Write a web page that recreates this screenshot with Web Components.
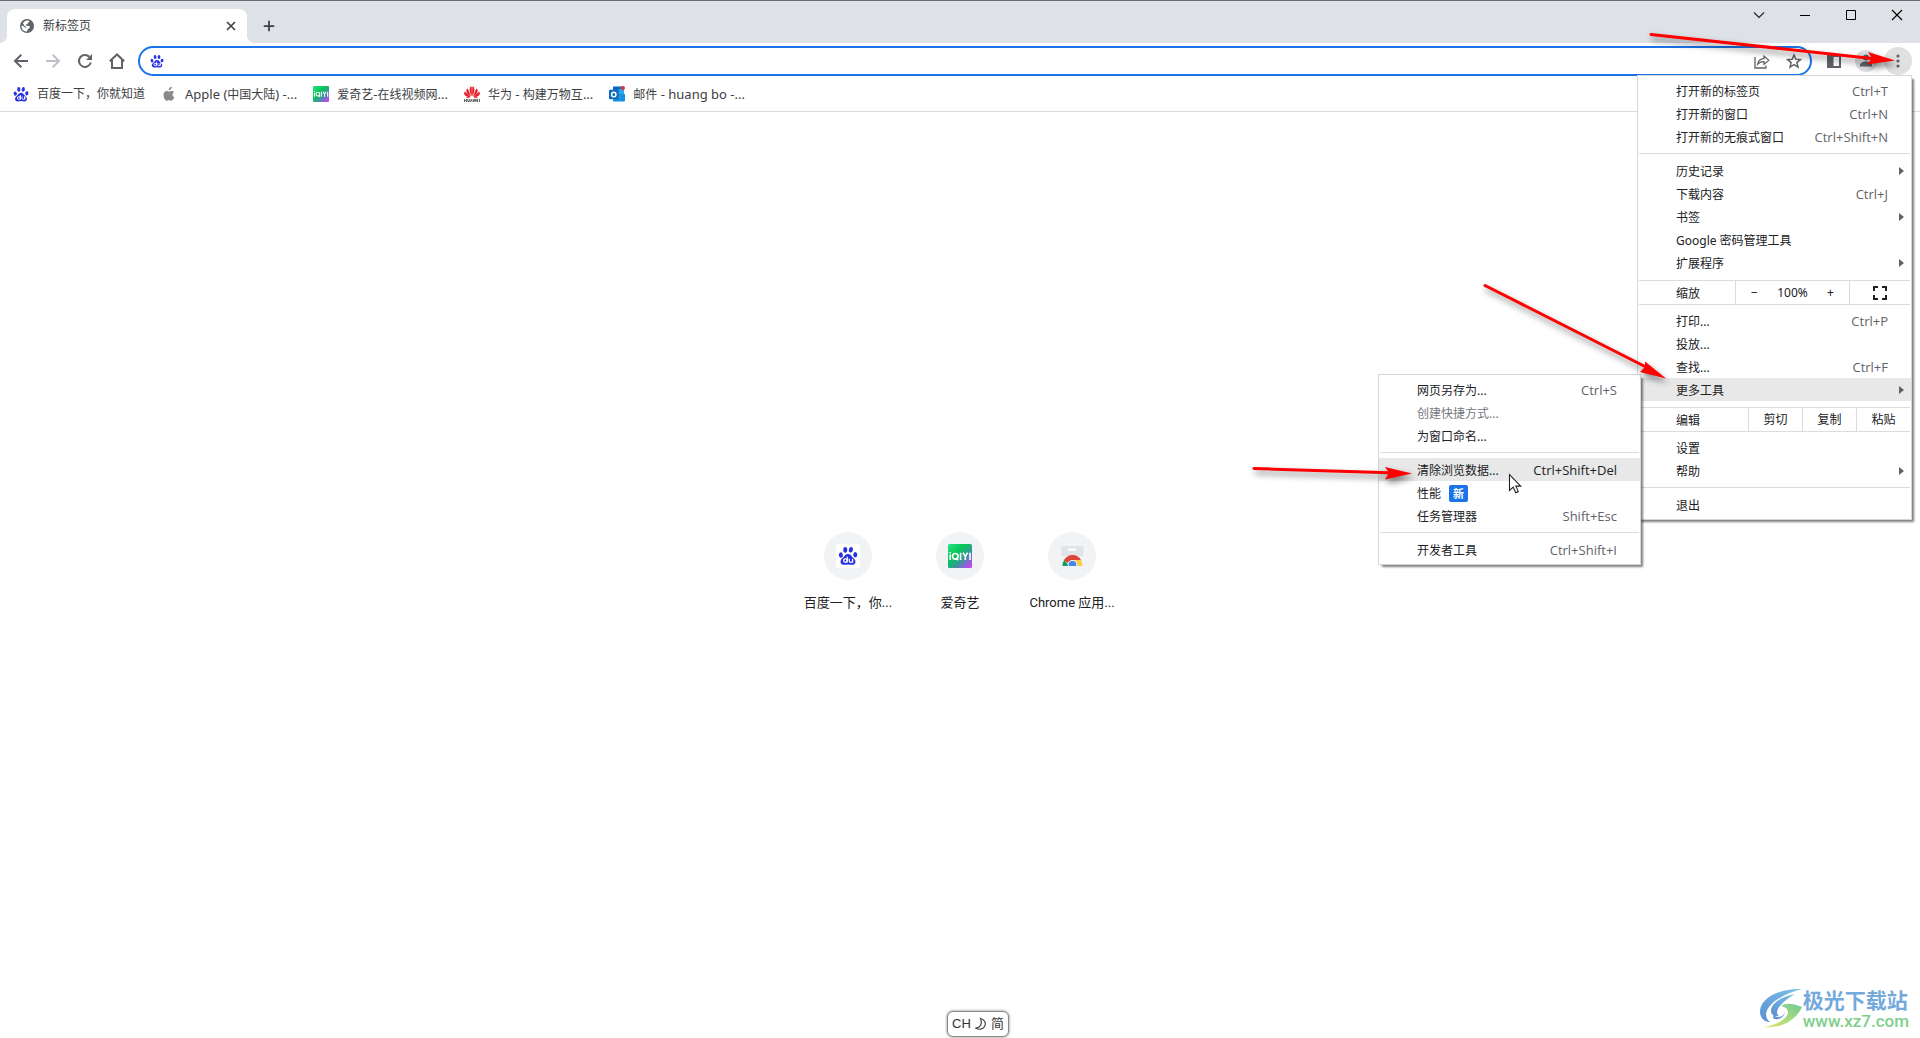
<!DOCTYPE html>
<html lang="zh-CN">
<head>
<meta charset="utf-8">
<title>新标签页</title>
<style>
  html, body { margin: 0; height: 100%; }
  body {
    font: 12px/16px "Noto Sans", "Noto Sans CJK SC", sans-serif;
    color: #202124;
    background: #fff;
    overflow: hidden;
  }
  .latin { font-size: 13px; }
</style>
</head>
<body>
<browser-window>
  <tab-strip slot="tabs" label="新标签页"></tab-strip>
  <nav-toolbar slot="toolbar"></nav-toolbar>
  <bookmarks-bar slot="bookmarks">
    <bookmark-item><ui-icon slot="icon" name="baidu"></ui-icon>百度一下，你就知道</bookmark-item>
    <bookmark-item><ui-icon slot="icon" name="apple"></ui-icon><span class="latin">Apple (</span>中国大陆<span class="latin">) -...</span></bookmark-item>
    <bookmark-item><ui-icon slot="icon" name="iqiyi"></ui-icon>爱奇艺<span class="latin">-</span>在线视频网<span class="latin">...</span></bookmark-item>
    <bookmark-item><ui-icon slot="icon" name="huawei"></ui-icon>华为<span class="latin"> - </span>构建万物互<span class="latin">...</span></bookmark-item>
    <bookmark-item><ui-icon slot="icon" name="outlook"></ui-icon>邮件<span class="latin"> - huang bo -...</span></bookmark-item>
  </bookmarks-bar>

  <shortcut-tile><ui-icon slot="icon" name="baidu-tile" size="24"></ui-icon>百度一下，你...</shortcut-tile>
  <shortcut-tile><ui-icon slot="icon" name="iqiyi" size="24"></ui-icon>爱奇艺</shortcut-tile>
  <shortcut-tile><ui-icon slot="icon" name="webstore" size="24"></ui-icon>Chrome 应用...</shortcut-tile>

  <popup-menu slot="overlay" class="main">
    <menu-item keys="Ctrl+T">打开新的标签页</menu-item>
    <menu-item keys="Ctrl+N">打开新的窗口</menu-item>
    <menu-item keys="Ctrl+Shift+N">打开新的无痕式窗口</menu-item>
    <menu-separator></menu-separator>
    <menu-item submenu>历史记录</menu-item>
    <menu-item keys="Ctrl+J">下载内容</menu-item>
    <menu-item submenu>书签</menu-item>
    <menu-item>Google 密码管理工具</menu-item>
    <menu-item submenu>扩展程序</menu-item>
    <zoom-row></zoom-row>
    <menu-item keys="Ctrl+P">打印...</menu-item>
    <menu-item>投放...</menu-item>
    <menu-item keys="Ctrl+F">查找...</menu-item>
    <menu-item submenu active>更多工具</menu-item>
    <edit-row></edit-row>
    <menu-item>设置</menu-item>
    <menu-item submenu>帮助</menu-item>
    <menu-separator></menu-separator>
    <menu-item>退出</menu-item>
  </popup-menu>
  <popup-menu slot="overlay" class="sub">
    <menu-item keys="Ctrl+S">网页另存为...</menu-item>
    <menu-item disabled>创建快捷方式...</menu-item>
    <menu-item>为窗口命名...</menu-item>
    <menu-separator></menu-separator>
    <menu-item keys="Ctrl+Shift+Del" active>清除浏览数据...</menu-item>
    <menu-item badge="新">性能</menu-item>
    <menu-item keys="Shift+Esc">任务管理器</menu-item>
    <menu-separator></menu-separator>
    <menu-item keys="Ctrl+Shift+I">开发者工具</menu-item>
  </popup-menu>
  <guide-arrows slot="overlay"></guide-arrows>
  <ime-status slot="overlay"></ime-status>
  <site-watermark slot="overlay"></site-watermark>
</browser-window>

<script>
const define = (name, html, setup) => {
  const template = document.createElement('template');
  template.innerHTML = html;
  customElements.define(name, class extends HTMLElement {
    constructor() {
      super();
      this.attachShadow({ mode: 'open' }).append(template.content.cloneNode(true));
    }
    connectedCallback() { if (setup) setup(this, this.shadowRoot); }
  });
};

const reset = `
  :host, * { box-sizing: border-box; }
  button, input { font: inherit; color: inherit; border: 0; background: none; padding: 0; margin: 0; outline: 0; }
  button { display: flex; align-items: center; justify-content: center; }
  svg { display: block; }
`;

const paw = `
  <g fill="#2932e1">
    <ellipse cx="2.3" cy="7.6" rx="1.6" ry="2.1" transform="rotate(-12 2.3 7.6)"/>
    <ellipse cx="5.8" cy="3.4" rx="1.6" ry="2.3"/>
    <ellipse cx="10.3" cy="3.4" rx="1.6" ry="2.3" transform="rotate(8 10.3 3.4)"/>
    <ellipse cx="13.8" cy="7.4" rx="1.6" ry="2.1" transform="rotate(12 13.8 7.4)"/>
    <path d="M8 6.800c1.600 0 2.500 1.100 3.300 2.200s2.700 2.100 2.700 3.900c0 1.600-1.200 2.500-2.700 2.500-1.200 0-2.100-.3-3.300-.3s-2.100.3-3.300.3C3.200 15.400 2 14.500 2 12.900c0-1.800 1.900-2.800 2.700-3.900S6.400 6.800 8 6.800z"/>
  </g>
  <g fill="none" stroke="#fff" stroke-width="1">
    <circle cx="5.900" cy="12" r="1.400"/><path d="M7.400 9v4.600M9 10.500v1.800c0 1.500 2.700 1.500 2.700 0v-1.800M11.700 10.500v3.100"/>
  </g>`;

const icons = {
  baidu: ['0 0 16 16', paw],
  'baidu-tile': ['0 0 24 24', `<rect width="24" height="24" rx="3" fill="#fff"/><g transform="translate(2 1.500) scale(1.250)">${paw}</g>`],
  apple: ['0 0 16 16', `<path fill="#8a8a8a" d="M10.700.8c.1 1-.3 1.800-.8 2.400-.6.600-1.300 1-2.100.9-.1-.900.300-1.700.800-2.300.6-.600 1.400-1 2.100-1zM13.300 11.300c-.7 1.700-1.700 3.400-2.900 3.400-.9 0-1.200-.5-2.200-.5s-1.400.500-2.200.5c-1.700 0-3.500-3.200-3.500-5.800 0-2.500 1.600-3.900 3.200-3.900 1 0 1.800.600 2.500.6.600 0 1.500-.7 2.700-.7.8 0 1.700.400 2.300 1.200-2.200 1.300-1.900 4.300.1 5.200z"/>`],
  iqiyi: ['0 0 24 24', `<defs><linearGradient id="g" x1="0" y1="0" x2="1" y2="1"><stop offset="0" stop-color="#2be08a"/><stop offset=".35" stop-color="#06c755"/><stop offset=".6" stop-color="#2e9f8f"/><stop offset=".8" stop-color="#8a63d8"/><stop offset="1" stop-color="#e23cf0"/></linearGradient></defs>
    <rect width="24" height="24" rx="1.500" fill="url(#g)"/>
    <g fill="none" stroke="#fff" stroke-width="1.600"><path d="M2.200 10.500V16M2.200 8v1.300"/><circle cx="7.300" cy="12.300" r="2.800"/><path d="M8 14l2 2.300M12.600 8.700V16M15 8.700l2.300 3.800 2.300-3.800M17.300 12.300V16M22 8.700V16"/></g>`],
  huawei: ['0 0 16 16', `<g fill="#e8202a">
      <path d="M7.700 10.600C5.900 7 5.200 4.600 5.800 1.900 6.100.8 6.900.4 7.600.5c.3 3.200.4 6.700.1 10.100zM8.300 10.600c1.800-3.600 2.500-6 1.900-8.700C9.900.8 9.100.4 8.400.5c-.3 3.200-.4 6.700-.1 10.100z"/>
      <path d="M6.900 10.700C3.700 8.500 2.200 6.200 2.300 4.400c.1-1 .8-1.500 1.500-1.800 1 2.600 2.200 5.300 3.100 8.100zM9.100 10.700c3.200-2.200 4.700-4.500 4.600-6.300-.1-1-.8-1.500-1.500-1.800-1 2.600-2.200 5.300-3.100 8.100z"/>
      <path d="M6.400 11.100C3.400 11.200.9 10 .3 8.200 0 7 .3 6.200.7 5.600c2 1.600 4 3.500 5.700 5.500zM9.600 11.100c3 .1 5.500-1.100 6.100-2.900.3-1.200 0-2-.4-2.600-2 1.600-4 3.500-5.700 5.500z"/>
      <path d="M6.300 11.600c-1.700.8-3.300.8-4.500-.3 1.500-.1 3-.1 4.500.3zM9.700 11.600c1.700.8 3.300.8 4.500-.3-1.500-.1-3-.1-4.500.3z"/></g>
    <path stroke="#444" stroke-width=".8" fill="none" d="M.5 13v3M2.500 13v3M.5 14.500h2M3.800 13v2.500h1.600V13M6.300 16l1-2.800 1 2.800M9 13l.7 2.700.7-2.400.7 2.400.7-2.700M14.200 13.500h-1.400v2h1.400M12.800 14.500h1.200M15.500 13v3"/>`],
  outlook: ['0 0 16 16', `<path fill="#0a66bd" d="M4 .5h10a1 1 0 0 1 1 1V11H4z"/><path fill="#28a8ea" d="M9.500 3h5.500v5H9.500z"/><path fill="#50d9ff" d="M4 8h12v7H4z" opacity=".35"/><path fill="#1490df" d="M4 15.200V8l6.500 3.500L16 7.800v6.800a1 1 0 0 1-1 1H4.500z"/><rect y="3.800" width="9.500" height="9.500" rx=".8" fill="#0f6cbd"/><circle cx="4.800" cy="8.500" r="2.200" fill="none" stroke="#fff" stroke-width="1.400"/><circle cx="14" cy="2" r="2" fill="#e0343c"/>`],
  webstore: ['0 0 24 24', `<path fill="#e2e3e5" d="M2.200 2h20.600a.7.700 0 0 1 .7.700V12H1.500V2.700a.7.700 0 0 1 .7-.7z"/><rect x="8" y="4.500" width="8" height="2.200" rx="1.100" fill="#fff"/>
    <path fill="#0f9d58" d="M2.500 22a10 10 0 0 1 1.800-6.300L9 22z"/><path fill="#db4437" d="M4 16c1.800-3 4.800-5 8.500-5 3.600 0 6.600 1.700 8.500 5h-8.500l-4.700 3z"/><path fill="#ffcd40" d="M13 16h8a10 10 0 0 1 1.300 6H14z"/><circle cx="12.500" cy="21" r="4.900" fill="#f1f3f4"/><circle cx="12.500" cy="21" r="3.900" fill="#4285f4"/><path fill="#f1f3f4" d="M0 22h24v4H0z"/>`],
  globe: ['0 0 16 16', `<circle cx="8" cy="8" r="7" fill="#5f6368"/><path fill="#fff" d="M7.300 2.400c1.700 0 2.900.2 3.100 1.200.2.900-1.500.9-1.700 1.900-.1.900-1.800.6-2 1.600-.2.900 1.700.8 3.300.9 1 .2.900 1.300.5 2-.6.900-1.600.7-1.900 1.900-.1.800-.6 1.500-1.200 1.500-4-.3-5.200-3.600-4.800-6 1.400.2 2.600 1 3.300 2.200.5.500 1.500.3 1.400-.5-.3-.7-2.100-.7-2.300-1.800-.2-1.200-.1-1.500-1.200-1.600.7-1.700 1.900-2.900 3.500-3.300z"/>`],
  close: ['0 0 16 16', `<path d="M4 4l8 8M12 4l-8 8" stroke="#3c4043" stroke-width="1.600"/>`],
  plus: ['0 0 16 16', `<path d="M8 2v12M2 8h12" stroke="#3c4043" stroke-width="2"/>`],
  back: ['0 0 16 16', `<path d="M15 8H2.500M8.300 1.700L2 8l6.300 6.300" fill="none" stroke="#5f6368" stroke-width="2"/>`],
  forward: ['0 0 16 16', `<path d="M1 8h12.500M7.700 1.700L14 8l-6.300 6.300" fill="none" stroke="#bdc1c6" stroke-width="2"/>`],
  reload: ['0 0 16 16', `<path d="M13.800 9.500A6 6 0 1 1 12.300 3.700" fill="none" stroke="#5f6368" stroke-width="2"/><path fill="#5f6368" d="M15 1v6H9z"/>`],
  home: ['0 0 16 16', `<path d="M.8 8.300L8 1.500l7.200 6.800M3 7v8h10V7" fill="none" stroke="#5f6368" stroke-width="2"/>`],
  share: ['0 0 16 16', `<path d="M1 4v11h11v-2.500" fill="none" stroke="#5f6368" stroke-width="1.300"/><path d="M3.500 11.500c.5-3.500 2.500-5.500 6.500-5.800V3l4.800 4.200L10 11.400V8.700c-3-.1-5 .9-6.500 2.800z" fill="none" stroke="#5f6368" stroke-width="1.200"/>`],
  star: ['0 0 16 16', `<path d="M8 2l1.800 4.200 4.600.4-3.500 3 1.100 4.500L8 11.700l-4 2.400 1.100-4.500-3.500-3 4.600-.4z" fill="none" stroke="#5f6368" stroke-width="1.500"/>`],
  panel: ['0 0 16 16', `<path fill="#5f6368" fill-rule="evenodd" d="M1 2h14v13H1zM7.500 4v9H13V4z"/>`],
  avatar: ['0 0 22 22', `<circle cx="11" cy="11" r="11" fill="#dadce0"/><circle cx="11" cy="7.500" r="3" fill="#5f6368"/><path fill="#5f6368" d="M5 16.500v-1.300c0-2.400 3-3.700 6-3.700s6 1.300 6 3.700v1.300z"/>`],
  dots: ['0 0 16 16', `<g fill="#5f6368"><circle cx="8" cy="3" r="1.600"/><circle cx="8" cy="8" r="1.600"/><circle cx="8" cy="13" r="1.600"/></g>`],
  chevron: ['0 0 12 12', `<path d="M1 3.500l5 5 5-5" fill="none" stroke="#202124" stroke-width="1.100"/>`],
  min: ['0 0 12 12', `<path d="M1 6.500h10" stroke="#000"/>`],
  max: ['0 0 12 12', `<path d="M1.500 1.500h9v9h-9z" fill="none" stroke="#000"/>`],
  quit: ['0 0 12 12', `<path d="M1 1l10 10M11 1L1 11" stroke="#000" stroke-width="1.200"/>`],
  full: ['0 0 14 14', `<path d="M1 5V1h4M9 1h4v4M13 9v4H9M5 13H1V9" fill="none" stroke="#202124" stroke-width="2"/>`],
};

define('ui-icon', `<style>:host{display:block;flex:none} svg{display:block}</style>`, (el, root) => {
  const [box, body] = icons[el.getAttribute('name')];
  const size = el.getAttribute('size') || 16;
  root.innerHTML += `<svg width="${size}" height="${size}" viewBox="${box}" aria-hidden="true">${body}</svg>`;
});

define('browser-window', `<style>${reset}
  :host { display: flex; flex-direction: column; height: 100vh; position: relative; }
  main { flex: 1; display: flex; justify-content: center; align-items: flex-start; padding-top: 420px; }
</style>
<slot name="tabs"></slot><slot name="toolbar"></slot><slot name="bookmarks"></slot>
<main><slot></slot></main>
<slot name="overlay"></slot>`);

define('tab-strip', `<style>${reset}
  :host { display: flex; align-items: flex-end; height: 43px; background: #dee1e6; border-top: 1px solid #6a6b6f; padding-left: 7px; }
  .tab { position: relative; display: flex; align-items: center; gap: 8px; width: 240px; height: 34px; padding: 0 8px 0 12px; background: #fff; border-radius: 8px 8px 0 0; color: #3c4043; }
  .tab::before, .tab::after { content: ""; position: absolute; bottom: 0; width: 8px; height: 8px; }
  .tab::before { left: -8px; background: radial-gradient(circle at 0 0, transparent 8px, #fff 8px); }
  .tab::after { right: -8px; background: radial-gradient(circle at 100% 0, transparent 8px, #fff 8px); }
  .title { flex: 1; }
  .add { width: 28px; height: 34px; margin-left: 8px; }
  .controls { display: flex; margin-left: auto; align-self: flex-start; }
  .controls button { width: 46px; height: 28px; }
</style>
<div class="tab"><ui-icon name="globe"></ui-icon><span class="title"></span><button aria-label="关闭"><ui-icon name="close"></ui-icon></button></div>
<button class="add" aria-label="打开新的标签页"><ui-icon name="plus" size="14"></ui-icon></button>
<div class="controls">
  <button aria-label="搜索标签页"><ui-icon name="chevron" size="12"></ui-icon></button>
  <button aria-label="最小化"><ui-icon name="min" size="12"></ui-icon></button>
  <button aria-label="最大化"><ui-icon name="max" size="12"></ui-icon></button>
  <button aria-label="关闭窗口"><ui-icon name="quit" size="12"></ui-icon></button>
</div>`, (el, root) => { root.querySelector('.title').textContent = el.getAttribute('label'); });

define('nav-toolbar', `<style>${reset}
  :host { display: flex; align-items: center; gap: 4px; height: 36px; padding: 0 8px 0 7px; background: #fff; }
  button { width: 28px; height: 28px; border-radius: 50%; }
  .box { flex: 1; display: flex; align-items: center; gap: 4px; height: 30px; margin: 0 4px 0 3px; padding: 0 2px 0 10px; border: 2px solid #1a73e8; border-radius: 15px; }
  input { flex: 1; min-width: 0; height: 24px; padding-left: 8px; font-size: 14px; }
  .open { background: #e0e0e0; }
</style>
<button aria-label="后退"><ui-icon name="back"></ui-icon></button>
<button aria-label="前进"><ui-icon name="forward"></ui-icon></button>
<button aria-label="重新加载"><ui-icon name="reload"></ui-icon></button>
<button aria-label="主页"><ui-icon name="home"></ui-icon></button>
<div class="box"><ui-icon name="baidu" size="14"></ui-icon><input type="text" aria-label="地址和搜索栏">
  <button aria-label="分享"><ui-icon name="share"></ui-icon></button>
  <button aria-label="收藏"><ui-icon name="star"></ui-icon></button></div>
<button aria-label="侧边栏"><ui-icon name="panel"></ui-icon></button>
<button aria-label="个人资料"><ui-icon name="avatar" size="22"></ui-icon></button>
<button class="open" aria-label="菜单"><ui-icon name="dots"></ui-icon></button>`);

define('bookmarks-bar', `<style>:host { display: flex; align-items: center; gap: 16px; height: 33px; box-sizing: border-box; padding: 0 13px 2px; border-bottom: 1px solid #dadce0; background: #fff; }</style><slot></slot>`);

define('bookmark-item', `<style>
  :host { display: block; color: #3c4043; }
  a { display: flex; align-items: center; gap: 8px; color: inherit; text-decoration: none; white-space: nowrap; }
</style><a href="#"><slot name="icon"></slot><span><slot></slot></span></a>`);

define('shortcut-tile', `<style>
  :host { display: block; width: 112px; font: 13px/16px Roboto, "Noto Sans CJK SC", sans-serif; }
  a { display: flex; flex-direction: column; align-items: center; gap: 15px; color: inherit; text-decoration: none; white-space: nowrap; }
  .disc { display: flex; align-items: center; justify-content: center; width: 48px; height: 48px; border-radius: 50%; background: #f1f3f4; }
</style><a href="#"><span class="disc"><slot name="icon"></slot></span><span><slot></slot></span></a>`);

define('popup-menu', `<style>
  :host { position: absolute; box-sizing: border-box; padding: 3px 0; background: #fff; border: 1px solid #d5d7da; box-shadow: 3px 3px 2px -1px rgba(0,0,0,.5); }
  :host(.main) { top: 75px; right: 8px; width: 275px; }
  :host(.sub) { top: 374px; right: 279px; width: 263px; }
</style><slot></slot>`, el => el.setAttribute('role', 'menu'));

define('menu-separator', `<style>:host { display: block; height: 1px; margin: 5px 1px; background: #dadce0; }</style>`);

define('menu-item', `<style>${reset}
  :host { display: block; }
  button { width: 100%; height: 23px; padding: 2px 23px 0 38px; justify-content: flex-start; position: relative; white-space: nowrap; }
  :host([active]) button { background: #e8e8e8; }
  :host([disabled]) button { color: #75787c; }
  .keys { margin: 0 0 2px auto; color: #5f6368; font-family: "Open Sans", sans-serif; font-size: 13px; }
  :host([active]) .keys { color: #202124; }
  .tri { display: none; position: absolute; right: 7px; top: 8px; border: solid transparent; border-width: 4px 0 4px 5px; border-left-color: #5f6368; }
  :host([submenu]) .tri { display: block; }
  .badge { margin-left: 8px; padding: 0 4px; height: 17px; border-radius: 2px; background: #1a73e8; color: #fff; font-size: 11px; line-height: 17px; font-weight: 600; }
  .badge:empty, .keys:empty { display: none; }
</style><button role="menuitem"><span><slot></slot></span><span class="badge"></span><span class="keys"></span><i class="tri"></i></button>`, (el, root) => {
  root.querySelector('.keys').textContent = el.getAttribute('keys') || '';
  root.querySelector('.badge').textContent = el.getAttribute('badge') || '';
  root.querySelector('button').disabled = el.hasAttribute('disabled');
});

const rowStyle = `${reset}
  :host { display: flex; height: 25px; margin: 6px 1px 4px; border: solid #dadce0; border-width: 1px 0; }
  .name { flex: 1; padding-left: 37px; line-height: 25px; }
`;
define('zoom-row', `<style>${rowStyle}
  .zoom { display: flex; align-items: center; width: 114px; border-left: 1px solid #dadce0; }
  .zoom button { width: 37px; height: 23px; }
  .zoom span { flex: 1; text-align: center; }
  .full { width: 61px; border-left: 1px solid #dadce0; }
</style><span class="name">缩放</span><div class="zoom"><button aria-label="缩小">−</button><span>100%</span><button aria-label="放大">+</button></div><button class="full" aria-label="全屏"><ui-icon name="full" size="14"></ui-icon></button>`);

define('edit-row', `<style>${rowStyle}
  button { width: 54px; border-left: 1px solid #dadce0; }
</style><span class="name">编辑</span><button>剪切</button><button>复制</button><button>粘贴</button>`);

define('guide-arrows', `<style>
  :host { position: absolute; top: 0; right: 0; width: 700px; height: 520px; pointer-events: none; }
  svg { display: block; filter: drop-shadow(2px 4px 3px rgba(0,0,0,.5)); }
  .cursor { position: absolute; left: 288px; top: 473px; filter: none; }
</style>
<svg width="700" height="520" viewBox="1220 0 700 520" aria-hidden="true">
  <g fill="none" stroke="#f00" stroke-width="3" stroke-linecap="round"><path d="M1651 34.500L1872 58.500M1485 285.500L1646 367M1254 468.500L1389 472.800"/></g>
  <path fill="#f00" d="M1895 60.500L1868 52 1872 58.500 1867 64.500zM1666 378.500L1645 361.500 1645 367 1640 372zM1412 473.500L1385 467 1389 472.800 1385 479.500z"/>
</svg>
<svg class="cursor" width="14" height="22" viewBox="0 0 14 22" aria-hidden="true"><path d="M1.500 1.500v16l3.700-3.400 2.500 5.600 2.600-1.100-2.400-5.500h4.800z" fill="#fff" stroke="#222" stroke-width="1.100"/></svg>`);

define('ime-status', `<style>
  :host { position: absolute; left: 0; right: 0; bottom: 1px; display: flex; justify-content: center; pointer-events: none; }
  div { display: flex; align-items: center; gap: 4px; height: 26px; box-sizing: border-box; padding: 0 4px; margin-left: 36px; border: 1px solid #888; border-radius: 6px; background: #fff; box-shadow: 0 0 3px rgba(0,0,0,.5); color: #333; font: 13px/16px "Liberation Sans", "Noto Sans CJK SC", sans-serif; }
</style><div><span>CH</span><svg width="12" height="14" viewBox="0 0 12 14" aria-hidden="true"><path d="M5.500 1.500c4 1 6 4.500 4 8-1.700 3-5.500 3.500-8.500 1.700 4.500-.7 6.500-4.700 4.500-9.700z" fill="none" stroke="#444" stroke-width="1.200"/></svg><span>简</span></div>`);

define('site-watermark', `<style>
  :host { position: absolute; right: 11px; bottom: 7px; display: flex; align-items: flex-start; pointer-events: none; }
  svg { display: block; }
  .cn { font: 700 21px/24px "Noto Sans CJK SC", sans-serif; color: #74a9dc; }
  .url { font: 500 17px/20px Roboto, sans-serif; color: #7fcf8c; }
  p { margin: 0; }
</style>
<svg width="44" height="42" viewBox="0 0 44 42" aria-hidden="true">
  <defs><linearGradient id="a" x1="0" y1="1" x2="1" y2="0"><stop offset="0" stop-color="#5b8fd0"/><stop offset="1" stop-color="#7cc4ea"/></linearGradient><linearGradient id="b" x1="0" y1="1" x2="1" y2="0"><stop offset="0" stop-color="#e3e66a"/><stop offset="1" stop-color="#6ccb98"/></linearGradient></defs>
  <path fill="url(#a)" d="M43 2C22 1 2 10 1 24c0 7 4 11 10 11-5-4-5-10-1-15C16 12 28 6 43 2z"/>
  <path fill="url(#a)" d="M36 7C24 9 12 16 12 24c0 4 4 6 8 5-3-2-2-6 0-9 4-5 9-9 16-13z"/>
  <path fill="url(#b)" d="M22 19c6-4 13-2 21 1-5 12-20 22-38 20 12-2 24-8 24-15 0-3-3-5-7-6z"/>
  <path fill="#5b8fd0" d="M15 27c1 5 9 4 11-2-1 6-8 9-12 6z"/>
</svg>
<div><p class="cn">极光下载站</p><p class="url">www.xz7.com</p></div>`);
</script>
</body>
</html>
